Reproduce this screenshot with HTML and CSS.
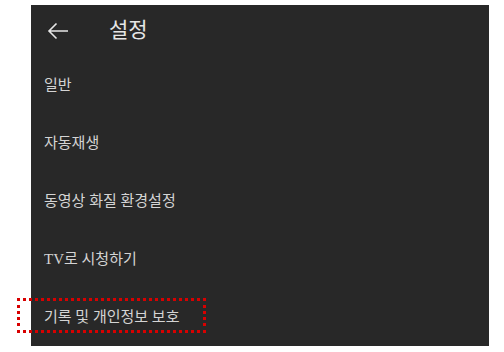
FILE: index.html
```html
<!DOCTYPE html>
<html lang="ko">
<head>
    <meta charset="UTF-8">
    <meta name="viewport" content="width=device-width, initial-scale=1.0">
    <title>설정</title>
    <link rel="stylesheet" href="styles.css">
</head>
<body>
    <div class="screen">
        <div class="header">
            <svg class="back" width="22" height="18" viewBox="0 0 22 18">
                <path d="M21 9H2M9.5 1.5L2 9l7.5 7.5" fill="none" stroke="#e6e6e6" stroke-width="1.6"/>
            </svg>
            <span class="title">설정</span>
        </div>

        <ul class="menu">
            <li>일반</li>
            <li>자동재생</li>
            <li>동영상 화질 환경설정</li>
            <li>TV로 시청하기</li>
            <li>기록 및 개인정보 보호</li>
        </ul>
    </div>

    <!-- highlight around the last item -->
    <div class="highlight"></div>
</body>
</html>
```

FILE: styles.css
```css
body {
    margin: 0;
    background: #fff;
    font-family: "Liberation Serif", "Noto Sans CJK KR", serif;
    position: relative;
    width: 504px;
    height: 352px;
    overflow: hidden;
}
.screen {
    margin: 5px 0 0 31px;
    width: 458px;
    height: 341px;
    background-color: #282828;
    color: #d4d4d4;
}
.header {
    display: flex;
    align-items: center;
    height: 51px;
    padding-left: 16px;
}
.back {
    display: block;
}
.title {
    margin-left: 40px;
    font-size: 21px;
    color: #e6e6e6;
    line-height: 1;
}
.menu {
    list-style: none;
    margin: 0;
    padding: 0;
}
.menu li {
    height: 58px;
    display: flex;
    align-items: center;
    padding-left: 13px;
    font-size: 15px;
    line-height: 1;
}
.highlight {
    position: absolute;
    left: 17px;
    top: 298px;
    width: 183px;
    height: 29px;
    border: 3px dotted #d80000;
}
```
